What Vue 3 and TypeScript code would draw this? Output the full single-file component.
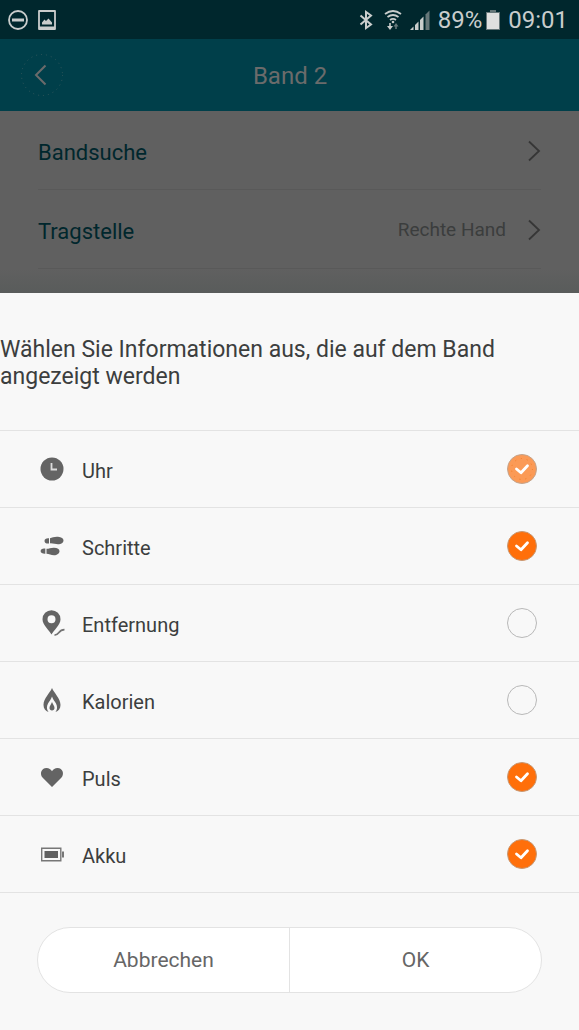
<script setup lang="ts">
import { ref } from 'vue'

type IconName = 'clock' | 'steps' | 'distance' | 'calories' | 'pulse' | 'battery'

interface Option {
  id: IconName
  label: string
  checked: boolean
  locked?: boolean
}

const options = ref<Option[]>([
  { id: 'clock', label: 'Uhr', checked: true, locked: true },
  { id: 'steps', label: 'Schritte', checked: true },
  { id: 'distance', label: 'Entfernung', checked: false },
  { id: 'calories', label: 'Kalorien', checked: false },
  { id: 'pulse', label: 'Puls', checked: true },
  { id: 'battery', label: 'Akku', checked: true },
])

const settings = [
  { label: 'Bandsuche', value: '' },
  { label: 'Tragstelle', value: 'Rechte Hand' },
]
</script>

<template>
  <div class="screen">
    <div class="status">
      <div class="status-side">
        <svg width="20" height="20" viewBox="0 0 20 20" fill="none" stroke="#c9cdcc" aria-hidden="true">
          <circle cx="10" cy="10" r="9" stroke-width="1.8" />
          <path d="M4 10H16" stroke-width="3" />
        </svg>
        <svg width="18" height="20" viewBox="0 0 18 20" aria-hidden="true">
          <path d="M1 1H17V19H1Z" fill="none" stroke="#c9cdcc" stroke-width="1.8" stroke-linejoin="round" />
          <path d="M1 16.500H17V19H1Z" fill="#c9cdcc" />
          <path d="M4 14.500V12.500L6.500 9.500L8 11L10.500 8.500L14 12.500V14.500Z" fill="#c9cdcc" />
        </svg>
      </div>
      <div class="status-side status-right">
        <svg width="14" height="20" viewBox="0 0 14 20" fill="none" stroke="#c9cdcc" stroke-width="2" aria-hidden="true">
          <path d="M1.500 5.500L12 14.500L7 18V2L12 5.500L1.500 14.500" />
        </svg>
        <svg class="wifi" width="18" height="20" viewBox="0 0 18 20" fill="none" stroke="#c9cdcc" aria-hidden="true">
          <path d="M1 4Q9 -2 17 4M3.500 7Q9 3 14.500 7M6 10Q9 7.800 12 10" stroke-width="1.8" />
          <circle cx="9" cy="12" r="1.300" fill="#c9cdcc" stroke="none" />
          <path d="M6 13V17" stroke-width="1.600" />
          <path d="M3 16H9L6 20Z" fill="#c9cdcc" stroke="none" />
          <path d="M12 15V19" stroke="#66797b" stroke-width="1.600" />
          <path d="M9.500 16.500H14.500L12 13Z" fill="#66797b" stroke="none" />
        </svg>
        <svg class="signal" width="20" height="20" viewBox="0 0 20 20" fill="#c9cdcc" aria-hidden="true">
          <path d="M0 20L3.500 16.500V20Z" />
          <path d="M5 20V15L8.500 11.500V20Z" />
          <path d="M10 20V10L13.500 6.500V20Z" />
          <path d="M15.500 20V4.500L19.500 0.500V20Z" fill="#667779" />
        </svg>
        <span>89%</span>
        <svg class="power" width="14" height="20" viewBox="0 0 14 20" aria-hidden="true">
          <path d="M4 0H10V3H4Z" fill="#667779" />
          <path d="M0 2H14V20H0Z" fill="#667779" />
          <path d="M1 3H13V19H1Z" fill="#dfe0df" />
        </svg>
        <span>09:01</span>
      </div>
    </div>

    <header class="bar">
      <button class="back" type="button" aria-label="Zurück">
        <svg width="42" height="42" viewBox="0 0 42 42" fill="none" aria-hidden="true">
          <circle cx="21" cy="21" r="20.500" stroke="#33585d" stroke-dasharray="1 4" />
          <path d="M24.500 11.500L15 21L24.500 30.500" stroke="#6b6b6b" stroke-width="2" />
        </svg>
      </button>
      <h1>Band 2</h1>
    </header>

    <main class="settings">
      <a v-for="item in settings" :key="item.label" class="setting" href="#">
        <span class="name">{{ item.label }}</span>
        <span class="value">{{ item.value }}</span>
        <svg width="13" height="22" viewBox="0 0 13 22" fill="none" stroke="#363636" stroke-width="1.8" aria-hidden="true">
          <path d="M1 1.500L11 11L1 20.500" />
        </svg>
      </a>
      <div class="shade"></div>
    </main>

    <form class="sheet" role="dialog" aria-labelledby="sheet-title" @submit.prevent>
      <h2 id="sheet-title">Wählen Sie Informationen aus, die auf dem Band angezeigt werden</h2>
      <ul>
        <li v-for="option in options" :key="option.id">
          <label :for="option.id">
            <svg class="icon" width="26" height="28" viewBox="0 0 26 28" aria-hidden="true">
              <template v-if="option.id === 'clock'">
                <circle cx="13" cy="14" r="11.500" fill="#646464" />
                <path d="M12.500 8V14.500H18" fill="none" stroke="#dcdcdc" stroke-width="1.800" />
              </template>
              <g v-else-if="option.id === 'steps'" fill="#646464">
                <path d="M11 6.200C13 5.500 16 4.500 19 4.800C22.500 5 24.500 6.500 24.500 8.500C24.500 10.800 22 12.200 19 12.200C16.500 12.200 14 11.200 11 11.400Z" />
                <path d="M10 6.300V11.400C7.500 11.800 5.500 10.800 5.500 8.900C5.500 6.900 7.500 6 10 6.300Z" />
                <path d="M7.500 16.800C10 16.800 12 15.600 15 15.700C18.500 15.800 20.500 17.200 20.500 19.200C20.500 21.500 18 23.200 15 23.200C12 23.200 10 22 7.500 21.700Z" />
                <path d="M6.300 16.600V21.700C3.500 21.800 1.600 20.800 1.600 19C1.600 17.200 3.500 16.200 6.300 16.600Z" />
              </g>
              <template v-else-if="option.id === 'distance'">
                <path fill-rule="evenodd" fill="#646464" d="M12.500 25.500C10.500 21.500 3.500 16 3.500 10.200A9 9 0 0 1 21.500 10.200C21.500 16 14.500 21.500 12.500 25.500ZM12.500 6.200A4 4 0 1 0 12.500 14.200A4 4 0 1 0 12.500 6.200Z" />
                <path d="M15.500 26.200C20.500 26 19 20.800 25.500 20.700" fill="none" stroke="#747474" stroke-width="1.700" />
              </template>
              <g v-else-if="option.id === 'calories'" fill="#646464">
                <path d="M13 2C15 7 21.500 12.500 21.500 19C21.500 22.500 19.500 25 16.500 26C18.500 23.500 18.500 20.500 17 17.500C15.500 15 14 13.500 13 10.500C12 13.500 10.500 15 9 17.500C7.500 20.500 7.500 23.500 9.500 26C6.500 25 4.500 22.500 4.500 19C4.500 12.500 11 7 13 2Z" />
                <path d="M13 16C14 18.500 15.500 20 15.500 22C15.500 23.600 14.500 24.500 13 24.500C11.500 24.500 10.500 23.600 10.500 22C10.500 20 12 18.500 13 16Z" />
              </g>
              <path v-else-if="option.id === 'pulse'" fill="#646464" d="M13 24L3.500 14.500C0.500 11.200 2 5 7.500 5C10 5 12 6.300 13 8.300C14 6.300 16 5 18.500 5C24 5 25.500 11.200 22.500 14.500Z" />
              <g v-else>
                <path d="M2.700 8.200H21.800V20.800H2.700Z" fill="none" stroke="#777" stroke-width="1.400" />
                <path d="M5.500 11H19V18H5.500Z" fill="#606060" />
                <path d="M23 11.500H25V17.500H23Z" fill="#777" />
              </g>
            </svg>
            <span class="label">{{ option.label }}</span>
            <span class="tick">
              <input :id="option.id" v-model="option.checked" type="checkbox" :disabled="option.locked" />
              <svg v-if="option.checked" width="30" height="30" viewBox="0 0 30 30" fill="none" aria-hidden="true">
                <circle v-if="option.locked" cx="15" cy="15" r="10.500" stroke="#f47d26" stroke-dasharray="1 5" />
                <path d="M9.500 15L14 18.800L20.500 11.800" stroke="#fff" stroke-width="2.800" stroke-linecap="round" stroke-linejoin="round" />
              </svg>
            </span>
          </label>
        </li>
      </ul>
      <div class="actions">
        <button type="button">Abbrechen</button>
        <button type="submit">OK</button>
      </div>
    </form>
  </div>
</template>

<style>
body {
  margin: 0;
}
</style>

<style scoped>
.screen {
  display: flex;
  flex-direction: column;
  min-height: 100vh;
  background: #606060;
  font-family: Roboto, "Noto Sans", sans-serif;
}
.status {
  display: flex;
  justify-content: space-between;
  align-items: center;
  height: 39px;
  padding: 0 11px 0 8px;
  background: #00272d;
  color: #c9cdcc;
  font-size: 24px;
  line-height: 28px;
}
.status-side {
  display: flex;
  align-items: center;
  gap: 10px;
}
.status-right {
  gap: 8px;
}
.wifi {
  margin-left: 3px;
}
.power {
  margin-left: -4px;
}
.bar {
  display: grid;
  grid-template-columns: 42px 1fr 42px;
  align-items: center;
  height: 72px;
  padding: 0 20px 0 21px;
  background: #003f4a;
}
.back {
  display: grid;
  width: 42px;
  height: 42px;
  padding: 0;
  border: 0;
  background: none;
}
h1 {
  margin: 0;
  padding-top: 2px;
  color: #6b6b6b;
  font-size: 24px;
  line-height: 28px;
  font-weight: 400;
  text-align: center;
}
.settings {
  display: flex;
  flex-direction: column;
}
.setting {
  display: flex;
  align-items: center;
  height: 76px;
  margin: 0 38px;
  padding-top: 2px;
  border-bottom: 1px solid #595959;
  color: #00272d;
  text-decoration: none;
}
.name {
  flex: 1;
  padding-top: 4px;
  font-size: 22px;
  line-height: 28px;
}
.value {
  margin-right: 22px;
  color: #3b3d3d;
  font-size: 19px;
  line-height: 28px;
}
.shade {
  height: 24px;
  background: linear-gradient(#606060, #595c5b);
}
.sheet {
  flex: 1;
  background: #f8f8f8;
  color: #3c3e3e;
}
h2 {
  margin: 0;
  padding: 43px 40px 40px 0;
  font-size: 23px;
  line-height: 27px;
  font-weight: 400;
}
ul {
  margin: 0;
  padding: 0;
  border-bottom: 1px solid #e3e3e3;
  list-style: none;
}
li {
  border-top: 1px solid #e3e3e3;
}
label {
  display: flex;
  align-items: center;
  height: 76px;
  padding: 0 42px 0 39px;
}
.label {
  flex: 1;
  margin-left: 17px;
  padding-top: 3px;
  font-size: 20px;
  line-height: 28px;
}
.tick {
  display: grid;
}
.tick input,
.tick svg {
  grid-area: 1 / 1;
}
.tick svg {
  pointer-events: none;
}
.tick input {
  appearance: none;
  width: 30px;
  height: 30px;
  margin: 0;
  border: 1px solid #b8b8b8;
  border-radius: 50%;
}
.tick input:checked {
  border-color: #c79874;
  background: #ff6f0a;
}
.tick input:checked:disabled {
  border-color: #c4a48c;
  background: #fb9a56;
}
.actions {
  display: flex;
  height: 64px;
  margin: 34px 37px 37px;
  border: 1px solid #e3e3e3;
  border-radius: 33px;
  background: #fff;
  overflow: hidden;
}
.actions button {
  flex: 1;
  padding: 0;
  border: 0;
  background: none;
  color: #666;
  font-family: inherit;
  font-size: 21px;
  line-height: 28px;
}
.actions button + button {
  border-left: 1px solid #e3e3e3;
}
</style>
